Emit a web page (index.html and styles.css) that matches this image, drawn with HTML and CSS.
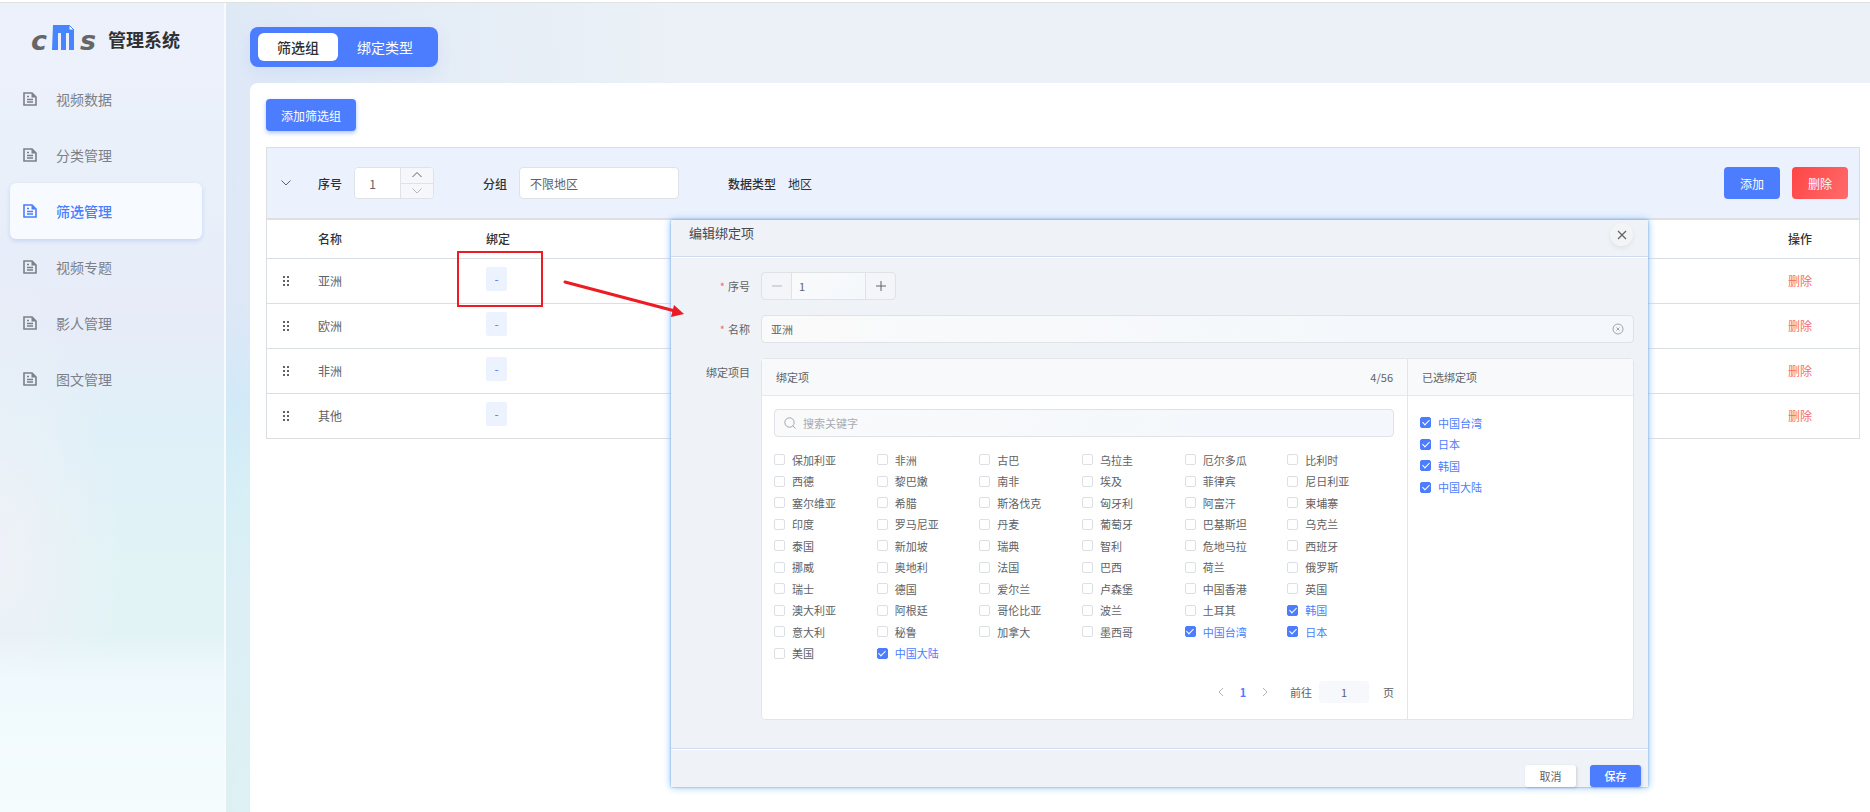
FILE: index.html
```html
<!DOCTYPE html>
<html lang="zh-CN">
<head>
  <meta charset="UTF-8" />
  <meta name="viewport" content="width=device-width, initial-scale=1.0"/>
  <title>管理系统 - 筛选管理</title>
  <link rel="stylesheet" href="styles.css">
</head>
<body>

  <!-- Shared icons -->
  <svg class="sprite" aria-hidden="true">
    <symbol id="icon-doc" viewBox="0 0 14 14">
      <path d="M1 1h8l4 4v8H1z" fill="none" stroke="currentColor" stroke-width="1.600"/>
      <path d="M8.500 1v4.500H13z" fill="currentColor"/>
      <path d="M4 4.500h2M4 7.500h6M4 10h6" stroke="currentColor" stroke-width="1.400"/>
    </symbol>
    <symbol id="icon-drag" viewBox="0 0 8 12">
      <path d="M1 1h2v2H1zM5 1h2v2H5zM1 5h2v2H1zM5 5h2v2H5zM1 9h2v2H1zM5 9h2v2H5z" fill="currentColor"/>
    </symbol>
    <symbol id="icon-down" viewBox="0 0 12 8">
      <path d="M1.500 1.500L6 6l4.500-4.500" fill="none" stroke="currentColor"/>
    </symbol>
    <symbol id="icon-up" viewBox="0 0 12 8">
      <path d="M1.500 6L6 1.500 10.500 6" fill="none" stroke="currentColor"/>
    </symbol>
  </svg>

  <div class="layout">
    <aside class="sidebar">
      <div class="brand">
        <div class="logo">
          <span>c</span>
          <svg viewBox="0 0 23 25" aria-hidden="true">
            <path d="M1 0h16l5 5v20h-5V8h-3v17h-5V8H6v17H0z" fill="#4785ff"/>
            <path d="M17 0v5h5z" fill="#fff" stroke="#4785ff"/>
          </svg>
          <span>s</span>
        </div>
        <h1>管理系统</h1>
      </div>
      <nav class="menu">
        <a href="#"><svg><use href="#icon-doc"/></svg>视频数据</a>
        <a href="#"><svg><use href="#icon-doc"/></svg>分类管理</a>
        <a href="#" class="active"><svg><use href="#icon-doc"/></svg>筛选管理</a>
        <a href="#"><svg><use href="#icon-doc"/></svg>视频专题</a>
        <a href="#"><svg><use href="#icon-doc"/></svg>影人管理</a>
        <a href="#"><svg><use href="#icon-doc"/></svg>图文管理</a>
      </nav>
    </aside>

    <main class="main">
      <div class="tabs">
        <button type="button" class="tab active">筛选组</button>
        <button type="button" class="tab">绑定类型</button>
      </div>

      <section class="card">
        <button type="button" class="btn btn-primary btn-add">添加筛选组</button>

        <div class="group">
          <div class="group-header">
            <button type="button" class="toggle" aria-label="收起"><svg><use href="#icon-down"/></svg></button>
            <label for="groupOrder">序号</label>
            <div class="stepper">
              <input type="text" id="groupOrder" value="1" />
              <div class="stepper-buttons">
                <button type="button" aria-label="增加"><svg><use href="#icon-up"/></svg></button>
                <button type="button" aria-label="减少"><svg class="muted"><use href="#icon-down"/></svg></button>
              </div>
            </div>
            <label for="groupName">分组</label>
            <input type="text" id="groupName" class="group-name" value="不限地区" />
            <span class="type-label">数据类型</span>
            <span class="type-value">地区</span>
            <div class="group-actions">
              <button type="button" class="btn btn-primary">添加</button>
              <button type="button" class="btn btn-danger">删除</button>
            </div>
          </div>

          <table>
            <thead>
              <tr>
                <th class="col-drag"></th>
                <th class="col-name">名称</th>
                <th>绑定</th>
                <th class="col-action">操作</th>
              </tr>
            </thead>
            <tbody id="groupRows"></tbody>
          </table>
        </div>
      </section>
    </main>
  </div>

  <!-- Highlight and arrow pointing to the dialog -->
  <div class="marker"></div>

  <div class="dialog" role="dialog" aria-labelledby="dialogTitle">
    <header class="dialog-header">
      <h2 id="dialogTitle">编辑绑定项</h2>
      <button type="button" class="close" aria-label="关闭">
        <svg viewBox="0 0 10 10"><path d="M1 1l8 8M9 1l-8 8" stroke="currentColor" stroke-width="1.200"/></svg>
      </button>
    </header>

    <form class="dialog-body" id="bindForm">
      <label for="itemOrder" class="required">序号</label>
      <div class="number">
        <button type="button" class="muted" aria-label="减少"><svg viewBox="0 0 10 10"><path d="M0 5h10" stroke="currentColor"/></svg></button>
        <input type="text" id="itemOrder" value="1" />
        <button type="button" aria-label="增加"><svg viewBox="0 0 10 10"><path d="M0 5h10M5 0v10" stroke="currentColor"/></svg></button>
      </div>

      <label for="itemName" class="required">名称</label>
      <div class="field">
        <input type="text" id="itemName" value="亚洲" />
        <svg viewBox="0 0 12 12"><circle cx="6" cy="6" r="5" fill="none" stroke="currentColor"/><path d="M4.500 4.500l3 3M7.500 4.500l-3 3" stroke="currentColor"/></svg>
      </div>

      <span class="form-label">绑定项目</span>
      <div class="transfer">
        <div class="panel">
          <div class="panel-header"><span>绑定项</span><span>4/56</span></div>
          <div class="panel-body">
            <div class="field search">
              <svg viewBox="0 0 12 12"><circle cx="5.500" cy="5.500" r="4.700" fill="none" stroke="currentColor"/><path d="M9 9l2.500 2.500" stroke="currentColor"/></svg>
              <input type="text" placeholder="搜索关键字" aria-label="搜索关键字" />
            </div>
            <div class="options" id="options"></div>
            <div class="pagination">
              <button type="button" aria-label="上一页"><svg viewBox="0 0 6 10"><path d="M5 1L1 5l4 4" fill="none" stroke="currentColor"/></svg></button>
              <button type="button" class="current">1</button>
              <button type="button" aria-label="下一页"><svg viewBox="0 0 6 10"><path d="M1 1l4 4-4 4" fill="none" stroke="currentColor"/></svg></button>
              <label for="page">前往</label>
              <input type="text" id="page" value="1" />
              <span>页</span>
            </div>
          </div>
        </div>
        <div class="panel">
          <div class="panel-header"><span>已选绑定项</span></div>
          <div class="selected" id="selected"></div>
        </div>
      </div>
    </form>

    <footer class="dialog-footer">
      <button type="button" class="btn-small">取消</button>
      <button type="submit" form="bindForm" class="btn-small primary">保存</button>
    </footer>
  </div>

  <svg class="arrow" viewBox="0 0 124 40" aria-hidden="true">
    <path d="M2 5l110 29" stroke="#ed1c24" stroke-width="3" stroke-linecap="round"/>
    <path d="M121 37l-13 3 3-12z" fill="#ed1c24"/>
  </svg>

  <script>
    const groupItems = ['亚洲', '欧洲', '非洲', '其他'];

    const countries = [
      '保加利亚', '非洲', '古巴', '乌拉圭', '厄尔多瓜', '比利时',
      '西德', '黎巴嫩', '南非', '埃及', '菲律宾', '尼日利亚',
      '塞尔维亚', '希腊', '斯洛伐克', '匈牙利', '阿富汗', '柬埔寨',
      '印度', '罗马尼亚', '丹麦', '葡萄牙', '巴基斯坦', '乌克兰',
      '泰国', '新加坡', '瑞典', '智利', '危地马拉', '西班牙',
      '挪威', '奥地利', '法国', '巴西', '荷兰', '俄罗斯',
      '瑞士', '德国', '爱尔兰', '卢森堡', '中国香港', '英国',
      '澳大利亚', '阿根廷', '哥伦比亚', '波兰', '土耳其', '韩国',
      '意大利', '秘鲁', '加拿大', '墨西哥', '中国台湾', '日本',
      '美国', '中国大陆'
    ];

    const chosen = ['中国台湾', '日本', '韩国', '中国大陆'];

    function createCheckbox(name, checked) {
      const label = document.createElement('label');
      label.className = 'check';

      const input = document.createElement('input');
      input.type = 'checkbox';
      input.value = name;
      input.checked = checked;

      const text = document.createElement('span');
      text.textContent = name;

      label.appendChild(input);
      label.appendChild(text);
      return label;
    }

    document.getElementById('groupRows').innerHTML = groupItems.map(name => `
      <tr>
        <td class="col-drag"><svg><use href="#icon-drag"/></svg></td>
        <td>${name}</td>
        <td class="col-bind"><button type="button" class="bind">-</button></td>
        <td><a href="#" class="remove">删除</a></td>
      </tr>`).join('');

    countries.forEach(name => {
      document.getElementById('options').appendChild(createCheckbox(name, chosen.includes(name)));
    });

    chosen.forEach(name => {
      document.getElementById('selected').appendChild(createCheckbox(name, true));
    });

    document.getElementById('bindForm').addEventListener('submit', (e) => {
      e.preventDefault();
    });
  </script>
</body>
</html>
```

FILE: styles.css
```css
* {
  box-sizing: border-box;
}

body {
  margin: 0;
  position: relative;
  overflow: hidden;
  border-top: 2px solid #fff;
  font-family: "Noto Sans CJK SC", "Noto Sans", sans-serif;
  font-size: 12px;
  color: #606266;
}

button, input {
  font-family: inherit;
  font-size: inherit;
  color: inherit;
  margin: 0;
}

button {
  padding: 0;
  border: none;
  background: none;
  cursor: pointer;
}

input {
  min-width: 0;
  border: 1px solid #dfe2e8;
  border-radius: 4px;
  outline: none;
}

a {
  color: inherit;
  text-decoration: none;
}

.sprite {
  position: absolute;
  width: 0;
  height: 0;
}

.layout {
  display: flex;
  min-height: calc(100vh - 2px);
  border-top: 1px solid #dfe2df;
  background:
    linear-gradient(90deg, rgba(235,241,246,0) 226px, #ebf1f6 680px),
    linear-gradient(180deg, #dfe9f6 0, #dee7f6 290px, #d2e9f7 400px, #d6eff6 490px, #dceff5 600px, #ddf1f4 100%);
}

/* Sidebar */
.sidebar {
  width: 226px;
  flex: none;
  border-right: 2px solid #f8fbfe;
  background:
    linear-gradient(180deg, rgba(244,252,254,0) 78%, #f0f9fd 84%, #f4fcfd 100%),
    radial-gradient(ellipse 120px 280px at 0 550px, #eef1f7, rgba(238,241,247,0)),
    linear-gradient(180deg, #edf1fb 0, #e9f0fa 190px, #e7ecf8 310px, #dff0f8 430px, #e2f3f6 560px, #e1f3f6 100%);
}

.brand {
  display: flex;
  align-items: center;
  gap: 12px;
  height: 68px;
  padding: 4px 0 0 31px;
}

.logo {
  display: flex;
  align-items: baseline;
  gap: 5px;
  margin-top: 4px;
  font: italic bold 27px/32px "DejaVu Sans", sans-serif;
  color: #666;
}

.logo svg {
  width: 23px;
  height: 25px;
}

h1 {
  margin: 0;
  font-size: 18px;
  color: #303133;
}

.menu a {
  display: flex;
  align-items: center;
  gap: 19px;
  height: 56px;
  margin: 0 22px 0 10px;
  padding-left: 13px;
  border-radius: 6px;
  font-size: 14px;
  color: #7c8088;
}

.menu svg {
  width: 14px;
  height: 14px;
}

.menu a.active {
  background: #f7faff;
  box-shadow: 0 2px 5px #c5d4f5;
  font-weight: 500;
  color: #4a7dff;
}

/* Main area */
.main {
  flex: 1;
  display: flex;
  flex-direction: column;
  align-items: flex-start;
  gap: 16px;
  padding: 24px 0 0 24px;
}

.tabs {
  display: flex;
  padding: 6px 6px 6px 8px;
  border-radius: 8px;
  background: #4d7dff;
  box-shadow: 0 6px 16px rgba(77,125,255,0.1);
}

.tab {
  height: 28px;
  padding: 0 19px;
  border-radius: 6px;
  font-size: 14px;
  color: #fff;
}

.tab.active {
  background: #fff;
  font-weight: 500;
  color: #303133;
}

.card {
  align-self: stretch;
  flex: 1;
  padding: 16px 10px 16px 16px;
  border-radius: 8px 0 0 0;
  background: #fff;
}

.btn {
  height: 32px;
  padding: 0 16px;
  border-radius: 4px;
  color: #fff;
}

.btn-primary {
  background: #4d7dff;
}

.btn-danger {
  background: linear-gradient(120deg, #ff4545, #ff6b6b);
}

.btn-add {
  display: block;
  padding: 0 15px;
  box-shadow: 0 2px 4px rgba(77,125,255,0.45);
}

.group {
  margin-top: 16px;
  border: 1px solid #dcdfe2;
}

.group-header {
  display: flex;
  align-items: center;
  height: 72px;
  padding: 0 11px 0 13px;
  border-bottom: 2px solid #dddfe2;
  background: #ebf2fd;
}

.group-header label,
.type-label {
  font-weight: 500;
  color: #303133;
}

.toggle svg,
.stepper svg {
  display: block;
  width: 12px;
  height: 8px;
}

.toggle {
  margin-right: 26px;
}

.stepper {
  display: flex;
  height: 32px;
  width: 80px;
  margin: 0 49px 0 12px;
  overflow: hidden;
  border: 1px solid #dfe2e8;
  border-radius: 4px;
  background: #fff;
}

.stepper input {
  flex: 1;
  padding: 0 10px 0 0;
  border: none;
  text-align: center;
}

.stepper-buttons {
  display: flex;
  flex-direction: column;
  width: 33px;
  border-left: 1px solid #dfe2e8;
  background: #f5f7fa;
}

.stepper-buttons button {
  flex: 1;
  display: flex;
  align-items: center;
  justify-content: center;
}

.stepper-buttons button + button {
  border-top: 1px solid #dfe2e8;
}

.muted {
  color: #b3b7be;
}

.group-name {
  width: 160px;
  height: 32px;
  margin: 0 49px 0 12px;
  padding: 0 10px;
}

.type-value {
  margin-left: 12px;
  color: #303133;
}

.group-actions {
  display: flex;
  gap: 12px;
  margin-left: auto;
}

table {
  width: 100%;
  border-collapse: collapse;
  table-layout: fixed;
}

th, td {
  height: 45px;
  padding: 0;
  text-align: left;
}

th {
  height: 38px;
  font-weight: 500;
  color: #303133;
}

tr {
  border-bottom: 1px solid #dcdfe2;
}

tbody tr:last-child {
  border-bottom: none;
}

.col-drag {
  width: 51px;
  padding-left: 15px;
}

.col-drag svg {
  display: block;
  width: 8px;
  height: 12px;
}

.col-name {
  width: 168px;
}

.col-action {
  width: 71px;
}

.col-bind {
  padding-bottom: 4px;
}

.bind {
  display: block;
  width: 21px;
  height: 24px;
  border-radius: 2px;
  background: #edf2ff;
  color: #4d7dff;
}

.remove {
  color: #f56c6c;
}

/* Marker and arrow lie over the table and the dialog */
.marker {
  position: absolute;
  left: 457px;
  top: 249px;
  width: 86px;
  height: 56px;
  border: 2px solid #ed1c24;
}

.arrow {
  position: absolute;
  left: 563px;
  top: 275px;
  width: 124px;
  height: 40px;
}

/* Dialog */
.dialog {
  position: absolute;
  left: 671px;
  right: 222px;
  top: 218px;
  background: #eff2f7;
  box-shadow: 0 0 2px #6aa6f0, 0 0 8px #8fc0fa;
  font-size: 11px;
}

.dialog-header {
  display: flex;
  align-items: flex-start;
  justify-content: space-between;
  padding: 3px 15px 10px 18px;
  border-bottom: 1px solid #cfdaee;
  box-shadow: 0 1px 0 #fff;
}

h2 {
  margin: 0;
  font-size: 13px;
  line-height: 20px;
  font-weight: 400;
  color: #45484d;
}

.close {
  display: flex;
  align-items: center;
  justify-content: center;
  width: 23px;
  height: 23px;
  border-radius: 50%;
  background: #f3f4f6;
  box-shadow: 0 2px 5px rgba(0,0,0,0.07);
}

.close svg {
  width: 10px;
  height: 10px;
}

.dialog-body {
  display: grid;
  grid-template-columns: 79px 1fr;
  gap: 15px 11px;
  padding: 15px 14px 28px 0;
}

.dialog-body > label,
.form-label {
  line-height: 28px;
  text-align: right;
}

.required::before {
  content: "*";
  margin-right: 3px;
  color: #f56c6c;
}

.number {
  display: flex;
  width: 135px;
  height: 28px;
  border: 1px solid #dfe2e6;
  border-radius: 4px;
  background: #f3f5f9;
}

.number button {
  width: 29px;
  display: flex;
  align-items: center;
  justify-content: center;
}

.number svg {
  width: 10px;
  height: 10px;
}

.number input {
  flex: 1;
  padding: 0 7px;
  border-width: 0 1px;
  border-radius: 0;
  background: linear-gradient(135deg, #fafafa, #f4f8fc);
}

.field {
  display: flex;
  align-items: center;
  height: 28px;
  padding: 0 9px;
  border: 1px solid #dfe2e6;
  border-radius: 4px;
  background: linear-gradient(100deg, #fafafa, #f4f8fc 70%);
}

.field input {
  flex: 1;
  padding: 0;
  border: none;
  background: none;
}

.field svg {
  width: 12px;
  height: 12px;
  color: #a0a5ad;
}

.transfer {
  display: grid;
  grid-template-columns: 1fr 226px;
  border: 1px solid #e2e6ea;
  border-radius: 4px;
  background: #fff;
}

.panel + .panel {
  border-left: 1px solid #e2e6ea;
}

.panel-header {
  display: flex;
  align-items: center;
  justify-content: space-between;
  height: 37px;
  padding: 0 14px;
  border-bottom: 1px solid #e6e9ed;
  background: #f8f9fb;
}

.panel-body {
  padding: 13px 13px 16px 12px;
}

.search {
  gap: 7px;
}

.search input::placeholder {
  color: #a8abb2;
  opacity: 1;
}

.options {
  display: grid;
  grid-template-columns: repeat(6, 1fr);
  grid-template-rows: repeat(10, 1fr);
  height: 215px;
  margin: 12px 4px 17px 0;
}

.selected {
  display: grid;
  grid-template-rows: repeat(4, 1fr);
  height: 86px;
  margin: 16px 12px;
}

.check {
  display: flex;
  align-items: center;
  gap: 7px;
  line-height: 16px;
}

.check input {
  appearance: none;
  width: 11px;
  height: 11px;
  border: 1px solid #dcdfe4;
  border-radius: 2px;
  background: #fff;
}

.check input:checked {
  border-color: #4d7dff;
  background: #4d7dff;
}

/* White tick */
.check input:checked::after {
  content: "";
  display: block;
  width: 3px;
  height: 6px;
  margin: 0 auto;
  border: solid #fff;
  border-width: 0 1px 1px 0;
  transform: rotate(45deg);
}

.check input:checked + span {
  color: #4d7dff;
}

.pagination {
  display: flex;
  align-items: center;
  justify-content: flex-end;
  height: 22px;
}

.pagination button {
  width: 22px;
  height: 22px;
  color: #b0b4bb;
}

.pagination svg {
  display: block;
  width: 6px;
  height: 10px;
  margin: 0 auto;
}

.pagination .current {
  font-weight: 700;
  color: #4d7dff;
}

.pagination label {
  margin-left: 14px;
}

.pagination input {
  width: 50px;
  height: 22px;
  margin: 0 14px 0 7px;
  border: none;
  background: #f7f8fb;
  text-align: center;
}

.dialog-footer {
  display: flex;
  justify-content: flex-end;
  gap: 14px;
  padding: 16px 7px 0;
  border-top: 1px solid #cfdaee;
  box-shadow: inset 0 1px 0 #fff;
}

.btn-small {
  width: 51px;
  height: 22px;
  border-radius: 3px;
  background: #fff;
  box-shadow: 1px 1px 3px rgba(0,0,0,0.15);
}

.btn-small.primary {
  background: #4d7dff;
  font-weight: 500;
  color: #fff;
}
```
